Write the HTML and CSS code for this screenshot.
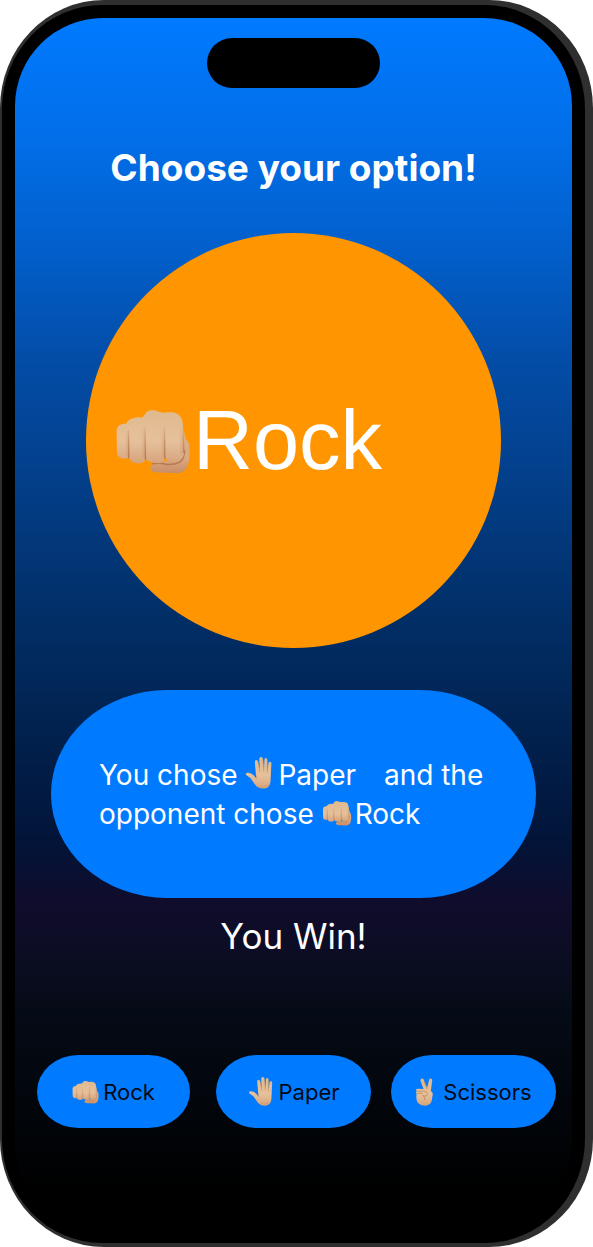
FILE: index.html
```
<!DOCTYPE html>
<html lang="en">
<head>
<meta charset="utf-8">
<meta name="viewport" content="width=device-width, initial-scale=1">
<title>Rock Paper Scissors</title>
<link rel="stylesheet" href="styles.css">
</head>
<body>
<svg class="defs" width="0" height="0" aria-hidden="true">
  <defs>
    <linearGradient id="skin" x1="0" y1="0" x2="0" y2="1">
      <stop offset="0" stop-color="#dfba8f"/><stop offset=".6" stop-color="#e5c09a"/><stop offset="1" stop-color="#d6a37b"/>
    </linearGradient>
    <linearGradient id="thumb" x1="0" y1="0" x2="0" y2="1">
      <stop offset="0" stop-color="#deb083"/><stop offset=".7" stop-color="#dca981"/><stop offset="1" stop-color="#c98d65"/>
    </linearGradient>
    <linearGradient id="crease" gradientUnits="userSpaceOnUse" x1="0" y1="50" x2="0" y2="170">
      <stop offset="0" stop-color="#c0895c" stop-opacity="0"/><stop offset=".5" stop-color="#bd8358" stop-opacity=".75"/><stop offset="1" stop-color="#ad7148"/>
    </linearGradient>
    <linearGradient id="shade" gradientUnits="userSpaceOnUse" x1="0" y1="50" x2="0" y2="170">
      <stop offset="0" stop-color="#cf9c70" stop-opacity="0"/><stop offset="1" stop-color="#cf9c70" stop-opacity=".6"/>
    </linearGradient>
    <symbol id="fist" viewBox="0 0 232 205">
      <path fill="url(#thumb)" d="M196 50C214 60 211 94 221 102C231 112 229 151 224 170C220 190 210 200 192 201L134 199C112 198 106 193 108 184C110 173 122 167 143 168L193 150Z"/>
      <path fill="none" stroke="#b57a50" stroke-width="5" d="M114 172Q140 168 156 174Q180 176 198 167Q212 156 212 130"/>
      <path fill="url(#skin)" d="M5 74C6 55 17 49 34 50C42 34 62 28 85 31C93 14 103 6 119 9C132 12 138 17 151 16C166 14 183 14 194 22C204 30 207 43 208 60L211 134C211 157 199 166 181 166C166 165 156 160 152 151C151 165 143 172 125 170C108 169 98 164 93 157C90 169 77 173 65 170C52 168 47 163 42 153C30 160 9 156 6 140Z"/>
      <path fill="none" stroke="url(#shade)" stroke-width="12" d="M38 72L39 150M88 62L90 156M147 58L149 153M203 50L205 142"/>
      <path fill="none" stroke="url(#crease)" stroke-width="4" d="M41 70L42 155M91 60L93 160M151 56L152 157M207 48L210 138"/>
    </symbol>
    <symbol id="palm" viewBox="0 0 72 87">
      <path fill="url(#skin)" d="M29 49L26 14Q26 8 30 8Q34 8 35 13L40 38L38 6Q38 0 43 0Q48 0 48 6L51 37L52 8Q52 3 56 3Q60 3 60 8L60 40L63 17Q64 12 68 13Q72 14 71 19L69 59Q70 80 56 85Q42 88 32 81Q26 75 20 65Q15 56 5 51Q0 48 2 44Q6 41 15 44Q24 48 30 59Z"/>
      <path fill="none" stroke="#c68f65" stroke-width="1.5" d="M35 14L40 41M48 8L50 40M60 10L60 43M30 49L31 60M35 79Q49 85 63 76"/>
    </symbol>
    <symbol id="victory" viewBox="0 0 54 84">
      <path fill="url(#skin)" d="M3 38Q0 33 7 32L24 33L15 8Q14 3 18 2Q23 1 25 6L35 29L41 5Q42 1 47 2Q52 3 50 9L46 39Q54 44 51 54L49 67Q45 83 28 83Q9 82 4 68Q1 58 3 49Q1 44 3 38Z"/>
      <path fill="none" stroke="#b77d52" stroke-width="2" d="M5 48Q14 43 21 47M5 40L24 39Q38 42 36 50Q34 57 21 53M22 53Q32 58 27 66M25 9L35 34"/>
    </symbol>
  </defs>
</svg>
<main class="phone">
  <div class="bezel">
    <div class="screen">
      <div class="island"></div>
      <h1 class="title">Choose your option!</h1>
      <div class="choice">
        <svg class="choice-icon" role="img" aria-label="Fist"><use href="#fist"/></svg>
        <span>Rock</span>
      </div>
      <p class="summary">You chose <svg class="inline-palm" role="img" aria-label="Hand"><use href="#palm"/></svg>Paper<span class="space"></span> and the<br>opponent chose <svg class="inline-fist" role="img" aria-label="Fist"><use href="#fist"/></svg>Rock</p>
      <p class="result">You Win!</p>
      <div class="options">
        <button class="option rock" type="button"><svg class="icon-fist" aria-hidden="true"><use href="#fist"/></svg>Rock</button>
        <button class="option paper" type="button"><svg class="icon-palm" aria-hidden="true"><use href="#palm"/></svg>Paper</button>
        <button class="option scissors" type="button"><svg class="icon-victory" aria-hidden="true"><use href="#victory"/></svg>Scissors</button>
      </div>
    </div>
  </div>
</main>
</body>
</html>
```

FILE: styles.css
```
* { box-sizing: border-box; }
body { margin: 0; background: #fff; font-family: Inter, "Liberation Sans", sans-serif; }
.defs { position: absolute; }
.phone {
  display: flex;
  min-height: 100vh;
  padding: 5px 8px 4px 2px;
  background: #2f2f2f;
  border-radius: 104px / 108px;
}
.bezel {
  display: flex;
  flex: 1;
  padding: 13px;
  background: #000;
  border-radius: 100px / 104px;
}
.screen {
  display: flex;
  flex: 1;
  flex-direction: column;
  align-items: center;
  padding-top: 20px;
  color: #fff;
  border-radius: 88px;
  background: linear-gradient(#007aff 0%, #026ee8 10%, #025fcb 19%, #034da8 28%, #033f8a 38%, #022f68 49%, #012453 57%, #021438 68%, #100c2c 73%, #0c0d24 77%, #050b16 82%, #02060c 89%, #000 97%);
}
.island { width: 173px; height: 50px; border-radius: 25px; background: #000; }
.title { margin: 56px 0 0; font-size: 37px; line-height: 48px; font-weight: 700; }
.choice {
  display: flex;
  align-items: center;
  gap: 2px;
  width: 80%;
  max-width: 415px;
  aspect-ratio: 1;
  margin-top: 41px;
  padding-left: 29px;
  border-radius: 50%;
  background: #ff9500;
  font-family: "Liberation Sans", sans-serif;
  font-size: 83px;
}
.choice-icon { width: 76px; height: 68px; }
.summary {
  align-self: stretch;
  margin: 42px 36px 0;
  padding: 66px 40px 64px 48px;
  border-radius: 116px / 104px;
  background: #007aff;
  font-size: 28px;
  line-height: 39px;
}
.result { margin: 14px 0 0; font-size: 35px; line-height: 48px; }
.inline-palm { width: 27px; height: 32px; margin-right: 6px; vertical-align: -4px; }
.inline-fist { width: 30px; height: 26px; margin-right: 3px; vertical-align: -2px; }
.space { display: inline-block; width: 20px; }
.options { display: flex; align-self: stretch; gap: 20px; margin-top: 95px; padding: 0 16px 0 22px; }
.option {
  display: flex;
  align-items: center;
  justify-content: center;
  height: 73px;
  padding: 0;
  border: 0;
  border-radius: 42px / 37px;
  background: #007aff;
  color: #020915;
  font-family: inherit;
  font-size: 22px;
}
.rock { flex: 153; margin-right: 6px; }
.paper { flex: 155; }
.scissors { flex: 165; }
.icon-fist { width: 27px; height: 24px; margin-right: 4px; }
.icon-palm { width: 25px; height: 29px; margin-right: 6px; }
.icon-victory { width: 19px; height: 28px; margin-right: 9px; }
```
